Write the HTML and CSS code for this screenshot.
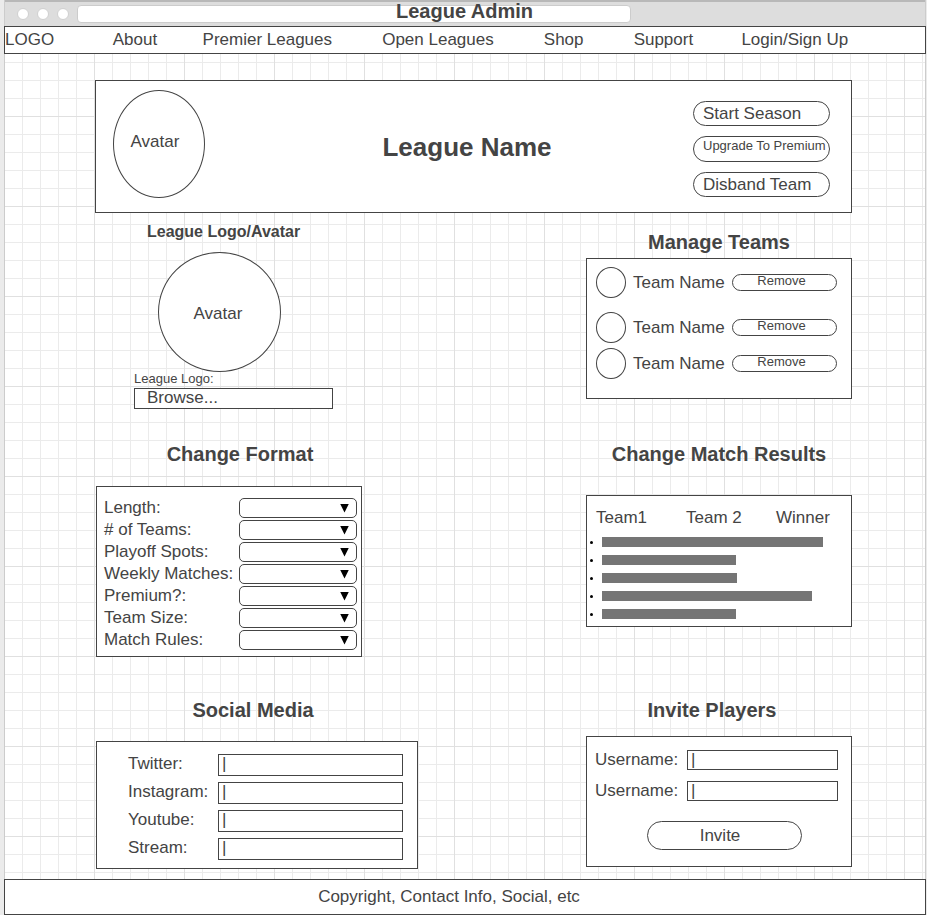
FILE: index.html
```html
<!DOCTYPE html>
<html lang="en">
<head>
<meta charset="utf-8">
<meta name="viewport" content="width=device-width, initial-scale=1">
<title>League Admin</title>
<link rel="stylesheet" href="styles.css">
</head>
<body>
<div class="window">
  <header class="titlebar">
    <span class="dot"></span><span class="dot"></span><span class="dot"></span>
    <div class="address"><h1 class="page-title">League Admin</h1></div>
  </header>

  <nav class="nav">
    <a href="#">LOGO</a>
    <a href="#">About</a>
    <a href="#">Premier Leagues</a>
    <a href="#">Open Leagues</a>
    <a href="#">Shop</a>
    <a href="#">Support</a>
    <a href="#">Login/Sign Up</a>
  </nav>

  <main class="main">
    <section class="hero">
      <div class="avatar avatar-hero">Avatar</div>
      <h2 class="league-name">League Name</h2>
      <div class="actions">
        <button type="button" class="pill action">Start Season</button>
        <button type="button" class="pill action action-small">Upgrade To Premium</button>
        <button type="button" class="pill action">Disband Team</button>
      </div>
    </section>

    <div class="sections">
      <section class="logo-section">
        <h3 class="logo-heading">League Logo/Avatar</h3>
        <div class="avatar avatar-logo">Avatar</div>
        <div class="upload">
          <label class="upload-label" for="logo-file">League Logo:</label>
          <label class="browse">Browse...<input type="file" id="logo-file" class="file"></label>
        </div>
      </section>

      <section class="teams-section">
        <h3 class="heading">Manage Teams</h3>
        <ul class="panel teams">
          <li class="team"><span class="badge"></span><span>Team Name</span><button type="button" class="pill remove">Remove</button></li>
          <li class="team"><span class="badge"></span><span>Team Name</span><button type="button" class="pill remove">Remove</button></li>
          <li class="team"><span class="badge"></span><span>Team Name</span><button type="button" class="pill remove">Remove</button></li>
        </ul>
      </section>

      <section class="format-section">
        <h3 class="heading">Change Format</h3>
        <form class="panel format">
          <label for="length">Length:</label>
          <span class="dropdown"><select id="length"><option></option></select></span>
          <label for="teams"># of Teams:</label>
          <span class="dropdown"><select id="teams"><option></option></select></span>
          <label for="playoff">Playoff Spots:</label>
          <span class="dropdown"><select id="playoff"><option></option></select></span>
          <label for="weekly">Weekly Matches:</label>
          <span class="dropdown"><select id="weekly"><option></option></select></span>
          <label for="premium">Premium?:</label>
          <span class="dropdown"><select id="premium"><option></option></select></span>
          <label for="size">Team Size:</label>
          <span class="dropdown"><select id="size"><option></option></select></span>
          <label for="rules">Match Rules:</label>
          <span class="dropdown"><select id="rules"><option></option></select></span>
        </form>
      </section>

      <section class="results-section">
        <h3 class="heading">Change Match Results</h3>
        <div class="panel results">
          <div class="results-head"><span>Team1</span><span>Team 2</span><span>Winner</span></div>
          <ul class="bars">
            <li><span class="bar" style="width: 90%"></span></li>
            <li><span class="bar" style="width: 54.5%"></span></li>
            <li><span class="bar" style="width: 55%"></span></li>
            <li><span class="bar" style="width: 85.4%"></span></li>
            <li><span class="bar" style="width: 54.5%"></span></li>
          </ul>
        </div>
      </section>

      <section class="social-section">
        <h3 class="heading">Social Media</h3>
        <form class="panel social">
          <label for="twitter">Twitter:</label><input type="text" id="twitter" class="field" value="|">
          <label for="instagram">Instagram:</label><input type="text" id="instagram" class="field" value="|">
          <label for="youtube">Youtube:</label><input type="text" id="youtube" class="field" value="|">
          <label for="stream">Stream:</label><input type="text" id="stream" class="field" value="|">
        </form>
      </section>

      <section class="invite-section">
        <h3 class="heading">Invite Players</h3>
        <form class="panel invite">
          <div class="invite-fields">
            <label for="user1">Username:</label><input type="text" id="user1" class="field" value="|">
            <label for="user2">Username:</label><input type="text" id="user2" class="field" value="|">
          </div>
          <button type="button" class="pill invite-button">Invite</button>
        </form>
      </section>
    </div>
  </main>

  <footer class="footer">Copyright, Contact Info, Social, etc</footer>
</div>
</body>
</html>
```

FILE: styles.css
```css
:root {
  --ink: #444;
  --minor: #ebebeb;
  --major: #e0e0e0;
}

* { box-sizing: border-box; }

body {
  margin: 0;
  background: #ebebeb;
  color: var(--ink);
  font: 17px/20px "Liberation Sans", Arial, sans-serif;
}

h1, h2, h3, ul { margin: 0; padding: 0; }
ul { list-style: none; }

button, input, select {
  margin: 0;
  padding: 0;
  color: inherit;
  font: inherit;
  background: #fff;
  border: 1px solid var(--ink);
}

/* Canvas with an 18px grid and a stronger line every 90px */
.window {
  display: flex;
  flex-direction: column;
  min-height: 100vh;
  margin: 0 1px 0 4px;
  background-color: #fff;
  background-image:
    linear-gradient(to right, var(--major) 1px, transparent 1px),
    linear-gradient(to bottom, var(--major) 1px, transparent 1px),
    linear-gradient(to right, var(--minor) 1px, transparent 1px),
    linear-gradient(to bottom, var(--minor) 1px, transparent 1px);
  background-size: 90px 90px, 90px 90px, 18px 18px, 18px 18px;
  background-position: 0 0, 0 26px, 0 0, 0 8px;
  background-origin: border-box;
  border: solid #ccc;
  border-width: 0 1px;
}

.titlebar {
  display: flex;
  align-items: center;
  gap: 8px;
  height: 26px;
  padding-left: 12px;
  background: #ddd;
  border-top: 2px solid #b8b8b8;
}

.dot {
  width: 12px;
  height: 12px;
  background: #fff;
  border: 1px solid #d0d0d0;
  border-radius: 50%;
}

.address {
  width: 61%;
  height: 18px;
  background: #fff;
  border: 1px solid #ccc;
  border-radius: 4px;
  padding-left: 318px;
}

.page-title {
  font-size: 20px;
  line-height: 10px;
  white-space: nowrap;
}

.nav {
  display: grid;
  grid-template-columns: 108fr 90fr 180fr 162fr 90fr 108fr 184fr;
  align-items: center;
  height: 28px;
  margin: 0 -1px;
  background: #fff;
  border: 1px solid var(--ink);
}

.nav a {
  color: inherit;
  text-decoration: none;
  white-space: nowrap;
}

.main {
  flex: 1;
  padding: 26px 73px 10px 90px;
}

.hero {
  display: flex;
  align-items: center;
  padding: 9px 21px 14px 17px;
  background: #fff;
  border: 1px solid var(--ink);
}

.avatar {
  display: flex;
  align-items: center;
  justify-content: center;
  background: #fff;
  border: 1px solid var(--ink);
  border-radius: 50%;
}

.avatar-hero {
  width: 92px;
  height: 108px;
  padding: 0 8px 4px 0;
}

.league-name {
  flex: 1;
  padding: 6px 0 0 36px;
  font-size: 26px;
  line-height: 30px;
  text-align: center;
}

.actions {
  display: flex;
  flex-direction: column;
  gap: 10px;
  padding-top: 9px;
}

.pill { border-radius: 15px; }

.action {
  width: 137px;
  height: 25px;
  padding-left: 9px;
  line-height: 23px;
  text-align: left;
  white-space: nowrap;
}

.action-small {
  height: 26px;
  padding-bottom: 6px;
  font-size: 13px;
  line-height: 18px;
}

.sections {
  display: grid;
  grid-template-columns: 322px 266px;
  justify-content: space-between;
  row-gap: 33px;
  padding-left: 1px;
}

.heading {
  font-size: 20px;
  line-height: 24px;
  text-align: center;
}

.panel {
  background: #fff;
  border: 1px solid var(--ink);
}

.logo-section { padding: 9px 0 0 38px; }

.logo-heading {
  padding-left: 13px;
  font-size: 16px;
  line-height: 20px;
}

.avatar-logo {
  width: 123px;
  height: 120px;
  margin: 10px 0 0 24px;
  padding: 3px 3px 0 0;
}

.upload {
  display: flex;
  flex-direction: column;
  gap: 3px;
}

.upload-label {
  font-size: 13px;
  line-height: 13px;
}

.browse {
  position: relative;
  width: 199px;
  height: 21px;
  padding-left: 12px;
  line-height: 18px;
  background: #fff;
  border: 1px solid var(--ink);
}

.file {
  position: absolute;
  inset: 0;
  width: 100%;
  height: 100%;
  opacity: 0;
}

.teams-section { padding-top: 17px; }

.teams {
  display: flex;
  flex-direction: column;
  gap: 5px;
  margin-top: 4px;
  padding: 8px 14px 19px 9px;
}

.team {
  display: flex;
  align-items: center;
  white-space: nowrap;
}

.team:first-child { margin-bottom: 9px; }

.badge {
  width: 30px;
  height: 31px;
  margin-right: 7px;
  border: 1px solid var(--ink);
  border-radius: 50%;
}

.remove {
  width: 105px;
  height: 17px;
  margin-left: auto;
  padding: 0 6px 4px 0;
  font-size: 13px;
  line-height: 11px;
}

.format-section { width: 266px; }
.format-section .heading { padding-left: 22px; }

.format {
  display: grid;
  grid-template-columns: 1fr 118px;
  row-gap: 2px;
  margin-top: 20px;
  padding: 11px 4px 6px 7px;
}

.dropdown {
  display: grid;
  align-items: center;
}

.dropdown select {
  grid-area: 1 / 1;
  width: 100%;
  height: 20px;
  border-radius: 5px;
  appearance: none;
}

.dropdown::after {
  grid-area: 1 / 1;
  justify-self: end;
  width: 9px;
  height: 9px;
  margin-right: 8px;
  background: #000;
  clip-path: polygon(0 0, 100% 0, 50% 100%);
  content: "";
  pointer-events: none;
}

.results {
  margin-top: 29px;
  padding: 12px 15px 7px 3px;
}

.results-head {
  display: grid;
  grid-template-columns: 90px 90px 1fr;
  padding-left: 6px;
}

.bars {
  display: flex;
  flex-direction: column;
  gap: 8px;
  margin-top: 9px;
}

.bars li {
  display: flex;
  align-items: center;
}

.bars li::before {
  flex: none;
  width: 3px;
  height: 3px;
  margin-right: 9px;
  background: #000;
  border-radius: 50%;
  content: "";
}

.bar {
  height: 10px;
  background: #757575;
}

.social-section, .invite-section { padding-top: 8px; }
.social-section .heading { padding-right: 8px; }

.social {
  display: grid;
  grid-template-columns: 90px 185px;
  row-gap: 6px;
  margin-top: 19px;
  padding: 12px 14px 8px 31px;
}

.field {
  width: 100%;
  height: 22px;
  padding: 0 0 3px 3px;
}

.social label { line-height: 20px; }

.invite-section .heading { padding-right: 14px; }

.invite {
  margin-top: 14px;
  padding: 13px 13px 16px 8px;
}

.invite-fields {
  display: grid;
  grid-template-columns: 1fr 151px;
  row-gap: 11px;
}

.invite-fields .field {
  height: 20px;
  padding-bottom: 1px;
}

.invite-button {
  display: block;
  width: 155px;
  height: 29px;
  margin: 20px auto 0 52px;
  padding-right: 9px;
}

.footer {
  height: 36px;
  margin: 0 -1px;
  padding-right: 32px;
  line-height: 34px;
  text-align: center;
  background: #fff;
  border: 1px solid var(--ink);
}
```
